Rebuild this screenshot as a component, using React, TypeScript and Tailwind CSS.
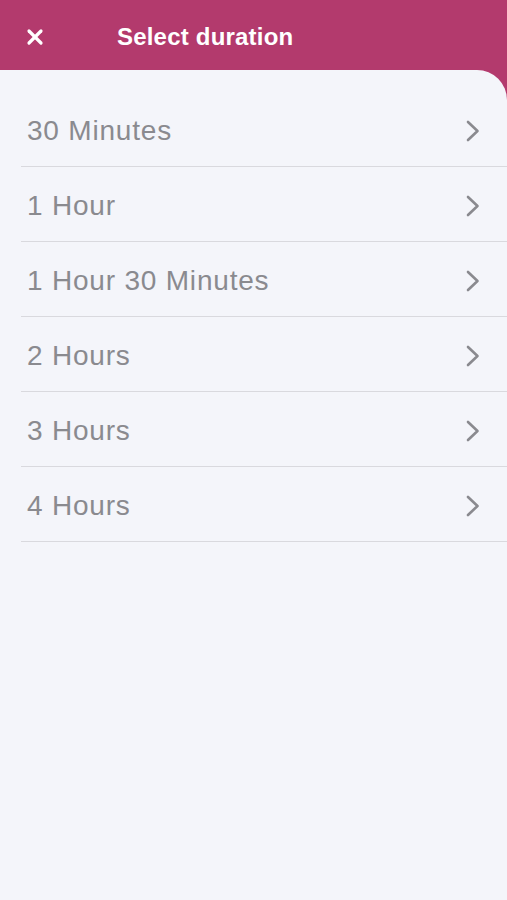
import { X } from 'lucide-react';

const durations = [
  '30 Minutes',
  '1 Hour',
  '1 Hour 30 Minutes',
  '2 Hours',
  '3 Hours',
  '4 Hours',
];

function Chevron() {
  return (
    <svg width="14" height="22" viewBox="0 0 14 22" fill="none" className="shrink-0">
      <path
        d="M2 2 L11.5 11 L2 20"
        stroke="#8a8a8f"
        strokeWidth="2.6"
        strokeLinecap="round"
        strokeLinejoin="round"
      />
    </svg>
  );
}

export default function App() {
  return (
    <div
      className="flex min-h-[900px] w-full flex-col bg-[#b33a6d]"
      style={{ fontFamily: '"Liberation Sans", Arial, sans-serif' }}
    >
      <header className="flex h-[70px] shrink-0 items-center pt-[4px]">
        <div className="flex w-[117px] items-center pl-[23px]">
          <X className="h-[24px] w-[24px] text-white" strokeWidth={3.2} />
        </div>
        <h1 className="text-[24px] font-bold leading-none tracking-[0.2px] text-white">
          Select duration
        </h1>
      </header>

      <main className="flex-1 rounded-tr-[30px] bg-[#f4f5fa] pt-[22px]">
        <ul>
          {durations.map((label) => (
            <li
              key={label}
              className="ml-[21px] flex h-[75px] items-center justify-between border-b border-[#d9d9de] pl-[6px] pr-[27px] pt-[3px]"
            >
              <span className="text-[28px] leading-none tracking-[0.8px] text-[#8a8a8f]">
                {label}
              </span>
              <Chevron />
            </li>
          ))}
        </ul>
      </main>
    </div>
  );
}
